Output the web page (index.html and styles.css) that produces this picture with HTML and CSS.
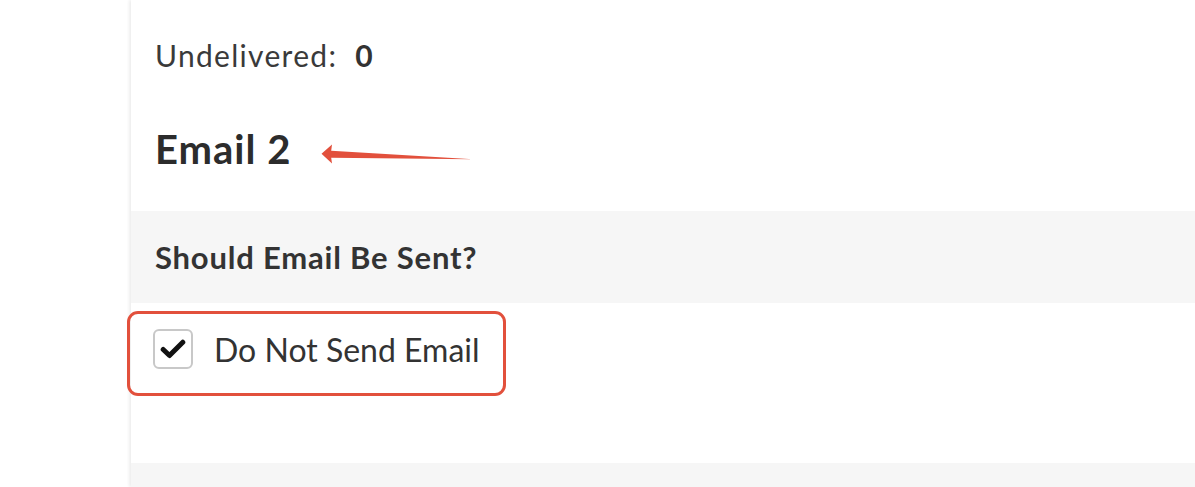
FILE: index.html
```html
<!DOCTYPE html>
<html>
<head>
<meta charset="utf-8">
<link rel="stylesheet" href="styles.css">
</head>
<body>
<div class="page">
  <div class="sidebar"></div>
  <div class="panel">
    <div class="stat">Undelivered:&nbsp; <b>0</b></div>
    <div class="title-row">
      <h2 class="title">Email 2</h2>
      <svg class="arrow" width="160" height="26" viewBox="0 0 160 26">
        <path d="M3.5 12.7 L14 3.5 L13.2 9.8 L155 18.2 L13.2 16.8 L14 22.5 Z" fill="#e2503c"/>
      </svg>
    </div>
    <div class="section-head">Should Email Be Sent?</div>
    <div class="option">
      <div class="highlight"></div>
      <span class="checkbox">
        <svg width="26" height="22" viewBox="0 0 26 22"><path d="M3.2 11.5 L9.5 17.5 L22.8 4.2" fill="none" stroke="#111" stroke-width="5" stroke-linecap="round" stroke-linejoin="round"/></svg>
      </span>
      <span class="label">Do Not Send Email</span>
    </div>
    <div class="next-band"></div>
  </div>
</div>
</body>
</html>
```

FILE: styles.css
```css
html, body {
  margin: 0;
  padding: 0;
  background: #fff;
  height: 100%;
  overflow: hidden;
}
body {
  font-family: Lato, "Open Sans", "Liberation Sans", sans-serif;
  color: #333;
}
.page {
  display: flex;
  height: 487px;
}
.sidebar {
  width: 131px;
  flex: 0 0 131px;
  background: #fff;
}
.panel {
  flex: 1;
  background: #fff;
  box-shadow: -2px 0 3px rgba(0, 0, 0, 0.07);
  display: flex;
  flex-direction: column;
}
.stat {
  padding: 37px 0 0 24px;
  font-size: 30px;
  line-height: 36px;
  letter-spacing: 1.3px;
  color: #3a3a3a;
}
.stat b {
  font-weight: 700;
  color: #333;
}
.title-row {
  position: relative;
  display: flex;
  align-items: flex-start;
  padding: 51px 0 0 24px;
}
.title {
  margin: 0;
  font-size: 40px;
  font-weight: 700;
  line-height: 50px;
  letter-spacing: 1px;
  color: #2c2c2c;
}
.arrow {
  position: absolute;
  left: 187px;
  top: 68px;
}
.section-head {
  margin-top: 37px;
  background: #f6f6f6;
  height: 92px;
  display: flex;
  align-items: center;
  padding-left: 24px;
  font-size: 31px;
  font-weight: 700;
  letter-spacing: 0.8px;
  color: #333;
}
.option {
  position: relative;
  display: flex;
  align-items: center;
  padding: 26px 0 0 22px;
  height: 40px;
}
.highlight {
  position: absolute;
  box-sizing: border-box;
  left: -4px;
  top: 8px;
  width: 379px;
  height: 85px;
  border: 3px solid #e2503c;
  border-radius: 11px;
}
.checkbox {
  width: 36px;
  height: 36px;
  border: 2px solid #c8c8c8;
  border-radius: 6px;
  background: #fff;
  display: flex;
  align-items: center;
  justify-content: center;
  box-sizing: content-box;
}
.label {
  margin-left: 21px;
  font-size: 32px;
  color: #333;
}
.next-band {
  margin-top: 94px;
  flex: 1;
  background: #f6f6f6;
}
```
